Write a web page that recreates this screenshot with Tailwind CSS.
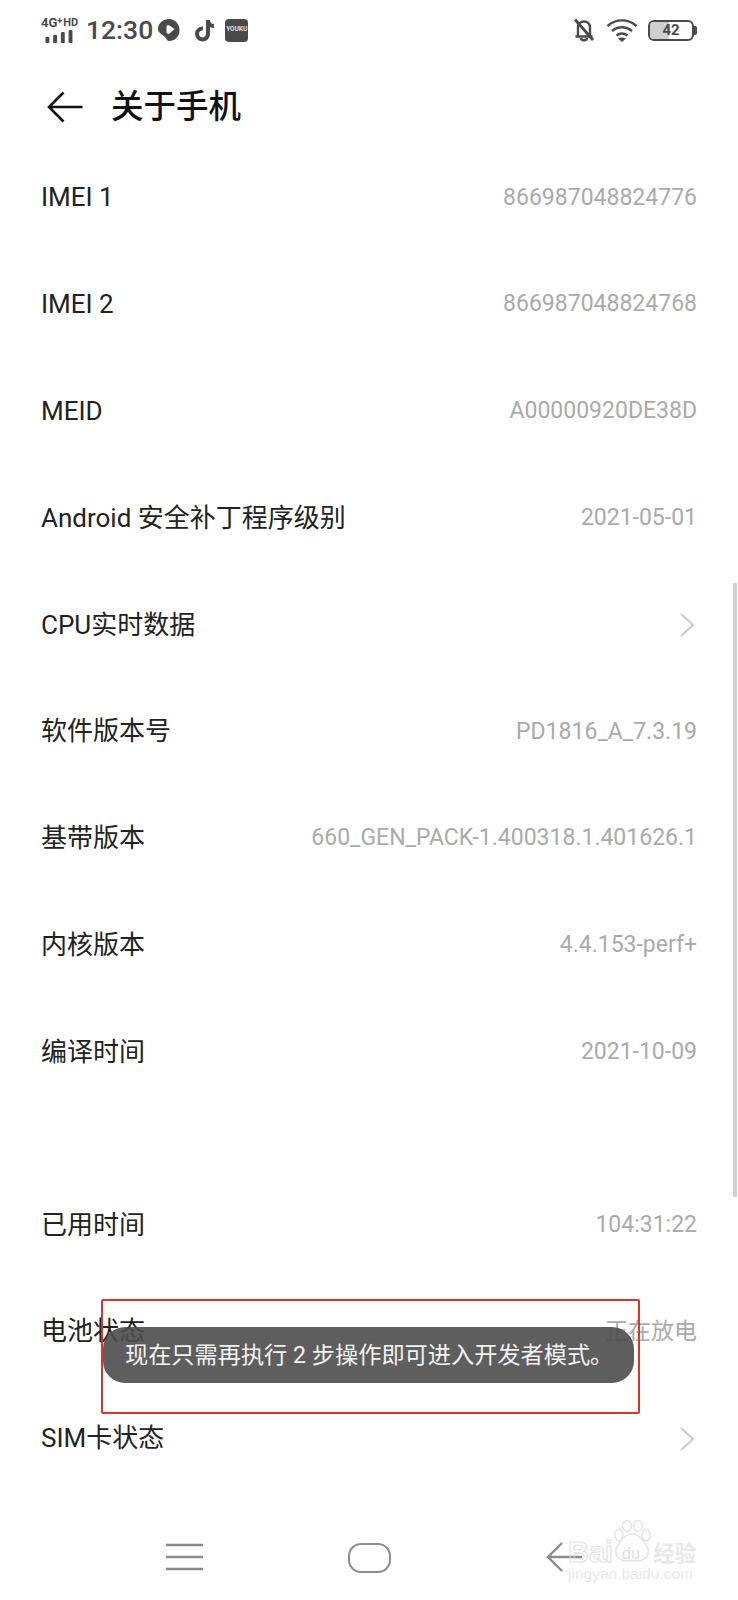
<!DOCTYPE html>
<html lang="zh">
<head>
  <meta charset="UTF-8" />
  <meta name="viewport" content="width=device-width, initial-scale=1.0" />
  <title>关于手机</title>
  <script src="https://cdn.jsdelivr.net/npm/@tailwindcss/browser@4"></script>
</head>
<body class="bg-white font-['Roboto','Noto_Sans_CJK_SC',sans-serif]">
  <div class="relative w-[738px] h-[1600px] overflow-hidden">
    <!-- Status bar -->
    <div class="h-[60px] pl-[41px] pr-[41px] pt-[15px] flex items-start justify-between text-[#4a4a4a]">
      <div class="flex items-center h-[30px]">
        <div class="w-[38px] h-[26px] flex flex-col">
          <div class="flex items-start h-[13px] font-bold leading-[12px]">
            <span class="text-[13px]">4G</span><span class="text-[9px] leading-[8px]">+</span><span class="text-[11px] ml-[1px]">HD</span>
          </div>
          <svg width="34" height="14" viewBox="0 0 34 14" fill="#4a4a4a">
            <rect x="4" y="7" width="4" height="7" rx="1.5"/><rect x="12" y="5" width="4" height="9" rx="1.5"/><rect x="20" y="2" width="4" height="12" rx="1.5"/><rect x="28" y="0" width="4" height="14" rx="1.5"/>
          </svg>
        </div>
        <span class="ml-[7px] text-[26.500px] font-medium leading-[30px]">12:30</span>
        <svg width="24" height="24" viewBox="0 0 24 24" class="ml-[4px]">
          <path d="M12 1a11 11 0 0 1 10.500 11.500c0 6-5 10.500-10 10.500-2.500 0-3-2-4-3.500C6 17 1 15 1 11 1 5.500 6 1 12 1z" fill="#4a4a4a"/>
          <path d="M9.500 8.500a2 2 0 0 1 3-1l5 3.500-5 4.500a2 2 0 0 1-3-1.500z" fill="#fff"/>
        </svg>
        <svg width="22" height="24" viewBox="0 0 22 24" class="ml-[12px]" fill="none" stroke="#4a4a4a" stroke-width="4">
          <path d="M10 10.500a5.500 5.500 0 1 0 5 5.500V2c0 3.500 2.500 6 6 6"/>
        </svg>
        <div class="ml-[10px] w-[23px] h-[23px] rounded-[4px] bg-[#4a4a4a] text-[#e0e0e0] text-[6.500px] font-bold flex items-center justify-center">YOUKU</div>
      </div>
      <div class="flex items-center h-[30px]">
        <svg width="22" height="24" viewBox="0 0 22 24" fill="none" stroke="#4a4a4a" stroke-width="2.400">
          <path d="M5 18V9.500C5 6 7.500 3.500 11 3.500s6 2.500 6 6V18M2.500 18.500h17M8 20c0 3 6 3 6 0"/>
          <path d="M2 1.500 20 22" stroke-width="2.800"/>
        </svg>
        <svg width="32" height="24" viewBox="0 0 32 24" class="ml-[11px]" fill="none" stroke="#4a4a4a" stroke-width="2.400">
          <path d="M1.500 8C10 .5 22 .5 30.500 8M6 13c6-5 14-5 20 0M10.500 17.500c3.500-2.500 7.500-2.500 11 0"/>
          <path d="M12 20.500c2.500-1.500 5.500-1.500 8 0L16 24z" fill="#4a4a4a" stroke="none"/>
        </svg>
        <div class="ml-[10px] relative w-[46px] h-[21px] rounded-[6px] border-2 border-[#4a4a4a] overflow-hidden">
          <div class="w-[19px] h-full bg-[#cfcfcf]"></div>
          <span class="absolute inset-0 flex items-center justify-center text-[15px] font-bold leading-none">42</span>
        </div>
        <div class="w-[3px] h-[9px] rounded-r-[2px] bg-[#4a4a4a]"></div>
      </div>
    </div>

    <!-- Header -->
    <div class="h-[90px] mt-[2px] flex items-center pl-[47px]">
      <svg width="36" height="32" viewBox="0 0 36 32" fill="none" stroke="#111" stroke-width="2.600">
        <path d="M35.500 16H2M16.500 1.500 2 16l14.500 14.500"/>
      </svg>
      <h1 class="ml-[28px] text-[32.500px] font-medium text-[#111] leading-none">关于手机</h1>
    </div>

    <!-- Rows -->
    <div class="pl-[41px] pr-[41px] text-[26px] text-[#222]">
      <div class="h-[106.800px] mt-[-7.500px] flex items-center justify-between"><span>IMEI 1</span><span class="text-[23px] text-[#aaa]">866987048824776</span></div>
      <div class="h-[106.800px] flex items-center justify-between"><span>IMEI 2</span><span class="text-[23px] text-[#aaa]">866987048824768</span></div>
      <div class="h-[106.800px] flex items-center justify-between"><span>MEID</span><span class="text-[23px] text-[#aaa]">A00000920DE38D</span></div>
      <div class="h-[106.800px] flex items-center justify-between"><span>Android 安全补丁程序级别</span><span class="text-[23px] text-[#aaa]">2021-05-01</span></div>
      <div class="h-[106.800px] flex items-center justify-between"><span>CPU实时数据</span>
        <svg width="16" height="26" viewBox="0 0 16 26" class="mr-[2px]" fill="none" stroke="#cdcdcd" stroke-width="2.200"><path d="M2 2l12 11L2 24"/></svg>
      </div>
      <div class="h-[106.800px] flex items-center justify-between"><span>软件版本号</span><span class="text-[23px] text-[#aaa]">PD1816_A_7.3.19</span></div>
      <div class="h-[106.800px] flex items-center justify-between"><span>基带版本</span><span class="text-[23px] text-[#aaa]">660_GEN_PACK-1.400318.1.401626.1</span></div>
      <div class="h-[106.800px] flex items-center justify-between"><span>内核版本</span><span class="text-[23px] text-[#aaa]">4.4.153-perf+</span></div>
      <div class="h-[106.800px] flex items-center justify-between"><span>编译时间</span><span class="text-[23px] text-[#aaa]">2021-10-09</span></div>
      <div class="h-[106.800px] mt-[66px] flex items-center justify-between"><span>已用时间</span><span class="text-[23px] text-[#aaa]">104:31:22</span></div>
      <div class="h-[106.800px] flex items-center justify-between"><span>电池状态</span><span class="text-[23px] text-[#aaa]">正在放电</span></div>
      <div class="h-[106.800px] flex items-center justify-between"><span>SIM卡状态</span>
        <svg width="16" height="26" viewBox="0 0 16 26" class="mr-[2px]" fill="none" stroke="#cdcdcd" stroke-width="2.200"><path d="M2 2l12 11L2 24"/></svg>
      </div>
    </div>

    <!-- Scrollbar -->
    <div class="absolute right-[1px] top-[583px] w-[4px] h-[614px] bg-[#cfcfcf]"></div>

    <!-- Toast + annotation box -->
    <div class="absolute left-[103px] top-[1327px] w-[531px] h-[56px] rounded-[22px] bg-[#4d4d4d]/90 text-[#f2f2f2] text-[23.200px] leading-[56px] pl-[22px] whitespace-nowrap">现在只需再执行 2 步操作即可进入开发者模式。</div>
    <div class="absolute left-[101px] top-[1299px] w-[539px] h-[115px] border-2 border-[#d8352c] rounded-[2px]"></div>

    <!-- Nav bar -->
    <svg class="absolute left-[166px] top-[1543px]" width="37" height="28" viewBox="0 0 37 28" stroke="#8c8c8c" stroke-width="2.400">
      <path d="M0 2h37M0 14h37M0 26h37"/>
    </svg>
    <div class="absolute left-[348px] top-[1543px] w-[43px] h-[30px] rounded-[13px] border-[2.500px] border-[#8c8c8c]"></div>
    <svg class="absolute left-[546px] top-[1542px]" width="36" height="30" viewBox="0 0 36 30" fill="none" stroke="#8c8c8c" stroke-width="2.400">
      <path d="M36 15H2M16 1 2 15l14 14"/>
    </svg>

    <!-- Baidu watermark -->
    <div class="absolute left-[568px] top-[1537px] w-[130px] text-[#e8e8e8] leading-none">
      <svg class="absolute left-[45px] top-[-17px]" width="38" height="42" viewBox="0 0 38 42" fill="none" stroke="#e4e4e4" stroke-width="1.500">
        <ellipse cx="6" cy="15" rx="4" ry="6"/><ellipse cx="14" cy="6" rx="4.500" ry="5.500"/><ellipse cx="25" cy="6" rx="4.500" ry="5.500"/><ellipse cx="33" cy="15" rx="4" ry="6"/><path d="M19 14c6 0 9 4 12 8 4 5 6 9 3 14-2 4-6 5-15 5S6 40 4 36c-3-5-1-9 3-14 3-4 6-8 12-8z"/>
      </svg>
      <div class="relative flex items-center h-[30px] font-['Liberation_Sans',sans-serif] text-[29px] font-bold">
        <span class="text-transparent [-webkit-text-stroke:1px_#e0e0e0]">Bai</span>
        <span class="absolute left-[54px] top-[9px] text-[16px] font-normal text-[#dedede]">du</span>
        <span class="ml-[40px] text-[21.500px] font-['Noto_Sans_CJK_SC',sans-serif]">经验</span>
      </div>
      <div class="mt-[-1px] text-[15.500px] whitespace-nowrap font-['Liberation_Sans',sans-serif]">jingyan.baidu.com</div>
    </div>
  </div>
</body>
</html>
